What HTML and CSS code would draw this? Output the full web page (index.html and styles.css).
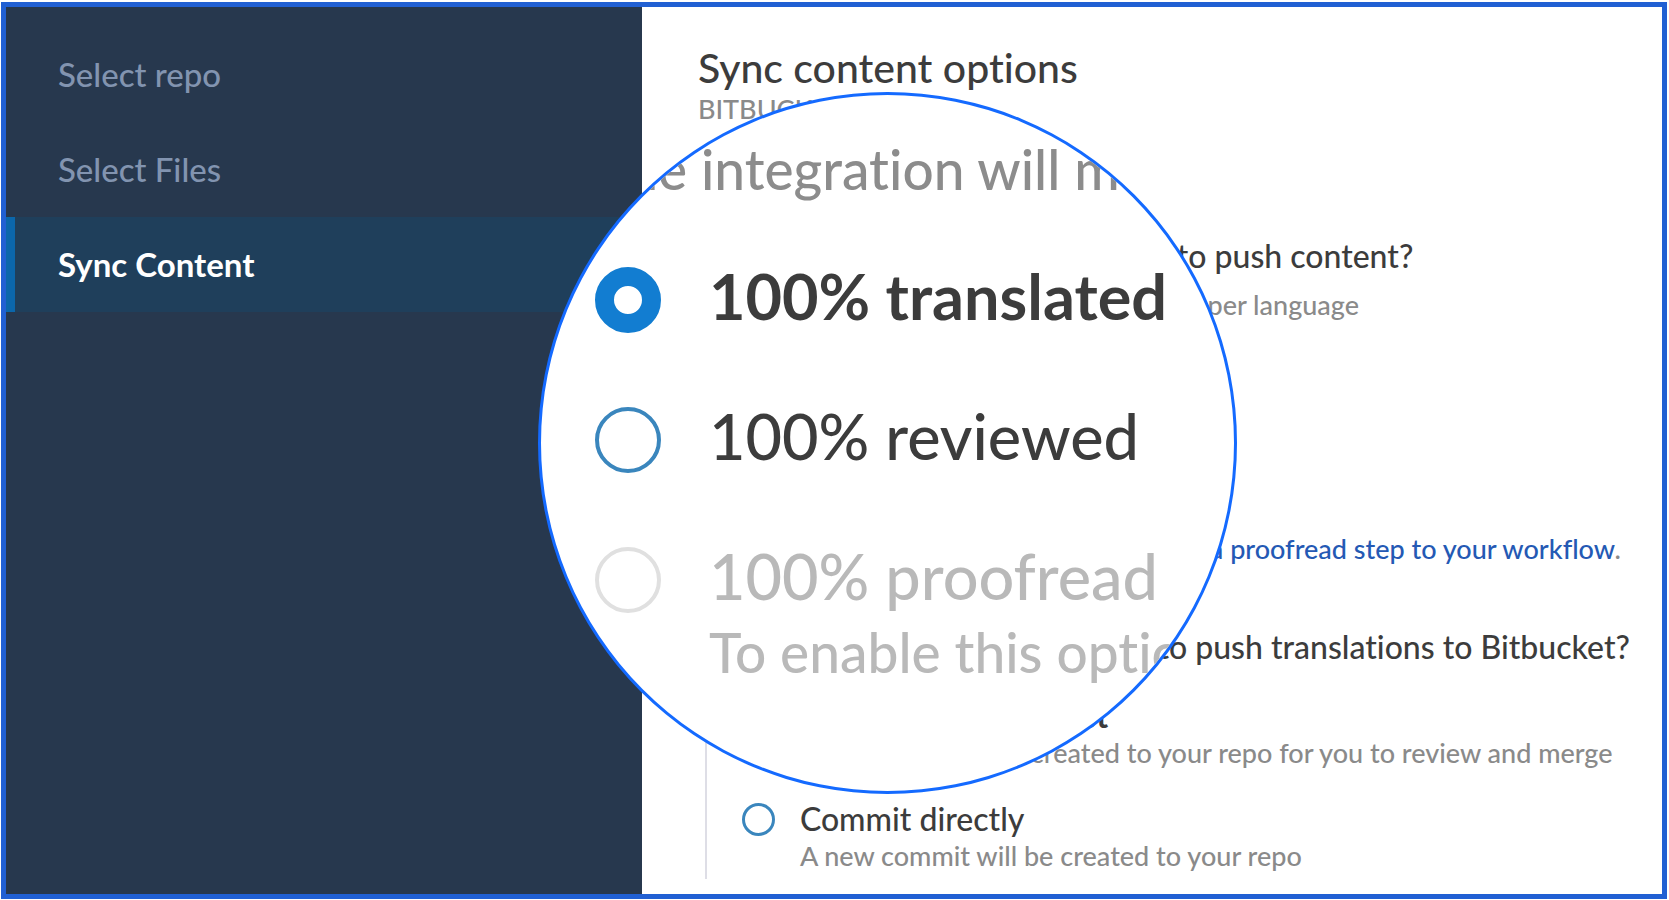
FILE: index.html
```
<!DOCTYPE html>
<html lang="en">
<head>
    <meta charset="UTF-8">
    <meta name="viewport" content="width=device-width, initial-scale=1.0">
    <title>Sync content options</title>
    <link rel="stylesheet" href="styles.css">
</head>
<body>
    <div class="window">
        <nav class="sidebar">
            <a href="#repo">Select repo</a>
            <a href="#files">Select Files</a>
            <a href="#sync" class="active">Sync Content</a>
        </nav>
        <main class="content">
            <h1>Sync content options</h1>
            <p class="service">BITBUCKET</p>

            <h2>When do you want an integration to push content?</h2>
            <p class="note">The integration will make one new commit per language</p>
            <div class="options">
                <div class="option">
                    <input type="radio" name="when" id="translated" checked>
                    <label for="translated"><b>100% translated</b></label>
                </div>
                <div class="option">
                    <input type="radio" name="when" id="reviewed">
                    <label for="reviewed">100% reviewed</label>
                </div>
                <div class="option">
                    <input type="radio" name="when" id="proofread" disabled>
                    <label for="proofread">100% proofread</label>
                    <p class="note">To enable this option, you can add <a href="#workflow">a proofread step to your workflow</a>.</p>
                </div>
            </div>

            <h2>How do you want an integration to push translations to Bitbucket?</h2>
            <div class="options">
                <div class="option">
                    <input type="radio" name="how" id="pull" checked>
                    <label for="pull"><b>Creates a pull request</b></label>
                    <p class="note">Pull request will be created to your repo for you to review and merge</p>
                </div>
                <div class="option">
                    <input type="radio" name="how" id="commit">
                    <label for="commit">Commit directly</label>
                    <p class="note">A new commit will be created to your repo</p>
                </div>
            </div>
        </main>

        <!-- magnifying glass over the push options -->
        <div class="lens">
            <p class="lens-note">The integration will make</p>
            <div class="lens-option">
                <input type="radio" name="zoom" id="zoom-translated" checked>
                <label for="zoom-translated"><b>100% translated</b></label>
            </div>
            <div class="lens-option">
                <input type="radio" name="zoom" id="zoom-reviewed">
                <label for="zoom-reviewed">100% reviewed</label>
            </div>
            <div class="lens-option">
                <input type="radio" name="zoom" id="zoom-proofread" disabled>
                <label for="zoom-proofread">100% proofread</label>
                <p>To enable this option</p>
            </div>
        </div>
    </div>
</body>
</html>
```
FILE: styles.css
```
* {
    box-sizing: border-box;
}
body {
    margin: 0;
    padding: 2px 2px 1px 1px;
    min-height: 100vh;
    display: flex;
    font-family: Lato, "Open Sans", sans-serif;
    font-weight: 500;
    font-variant-ligatures: none;
    color: #3c3c3c;
    background: #fff;
}
h1, h2, p {
    margin: 0;
    font-weight: inherit;
    white-space: nowrap;
}
b {
    font-weight: 700;
}
.window {
    position: relative;
    flex: 1;
    display: grid;
    grid-template-columns: 38.4% 1fr;
    border: 5px solid #2160d3;
    overflow: hidden;
}
.sidebar {
    background: #27384e;
    padding-top: 20px;
}
.sidebar a {
    display: block;
    padding-left: 52px;
    line-height: 95px;
    font-size: 33px;
    color: #8294b0;
    text-decoration: none;
}
.sidebar a.active {
    padding-left: 43px;
    border-left: 9px solid #0b67ab;
    background: #1f3f5b;
    color: #fff;
    font-weight: 700;
}
.content {
    padding: 36px 24px 0 56px;
}
h1 {
    font-size: 41px;
    line-height: 50px;
}
.service {
    font-size: 27px;
    line-height: 32px;
    color: #8a8a8a;
}
h2 {
    font-size: 32px;
    line-height: 40px;
    margin-top: 111px;
}
.note {
    font-size: 27px;
    line-height: 38px;
    color: #8a8a8a;
}
h2 + .note {
    margin: 10px 0 40px;
}
.note a {
    color: #2459b4;
    text-decoration: none;
}
.options {
    display: flex;
    flex-direction: column;
    gap: 29px;
    margin-top: 31px;
    margin-left: 7px;
    padding: 0 0 4px 35px;
    border-left: 2px solid #dedee6;
}
.options + h2 {
    margin-top: 55px;
}
.option {
    display: grid;
    grid-template-columns: 33px 1fr;
    column-gap: 25px;
    align-items: center;
    font-size: 32px;
    line-height: 36px;
}
.option .note {
    grid-column: 2;
}
input[type="radio"] {
    appearance: none;
    margin: 0;
    width: 33px;
    height: 33px;
    border: 3px solid #3a86bd;
    border-radius: 50%;
    background: #fff;
}
input[type="radio"]:checked {
    border: 9px solid #127dd1;
}
input[type="radio"]:disabled {
    border-color: #e0e0e0;
}
.lens {
    position: absolute;
    top: 85px;
    left: 532px;
    width: 699px;
    height: 702px;
    padding: 37px 0 0 54px;
    border: 3px solid #146aff;
    border-radius: 50%;
    background: #fff;
    overflow: hidden;
}
.lens p {
    font-size: 55px;
    line-height: 74px;
    color: #8c8c8c;
}
.lens .lens-note {
    margin-bottom: 51px;
}
.lens-option {
    display: grid;
    grid-template-columns: 66px 1fr;
    column-gap: 48px;
    align-items: center;
    margin-bottom: 62px;
    font-size: 63px;
    line-height: 78px;
    white-space: nowrap;
}
.lens .lens-option p {
    grid-column: 2;
    color: #b9b9b9;
}
.lens input[type="radio"] {
    width: 66px;
    height: 66px;
    margin-top: 8px;
    border-width: 4px;
}
.lens input[type="radio"]:checked {
    border-width: 19px;
}
.lens input:disabled + label {
    color: #b9b9b9;
}
```
